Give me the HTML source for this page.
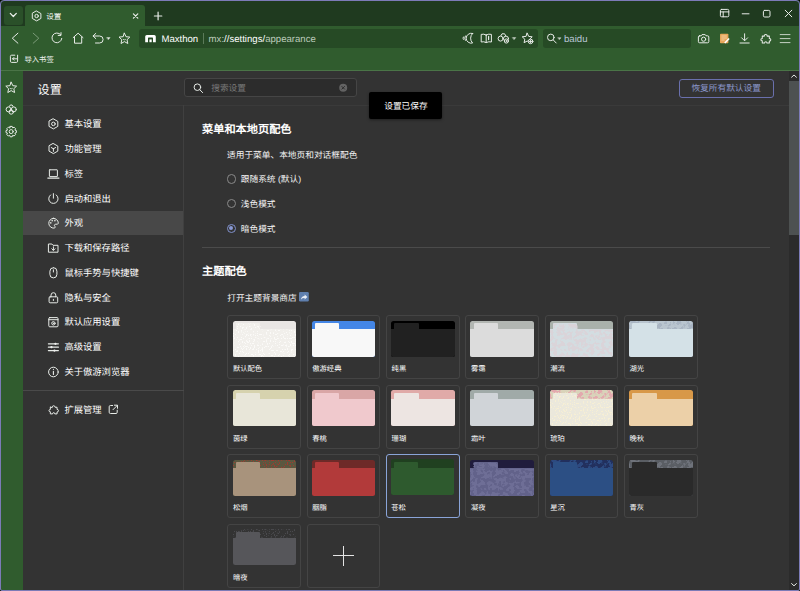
<!DOCTYPE html>
<html lang="zh-CN">
<head>
<meta charset="utf-8">
<title>设置</title>
<style>
html,body{margin:0;padding:0;background:#000;}
body{width:800px;height:591px;position:relative;overflow:hidden;font-family:"Liberation Sans",sans-serif;color:#fff;text-rendering:geometricPrecision;}
*{box-sizing:border-box;}
.abs,.win *{position:absolute;}
.win{position:absolute;left:0;top:0;width:800px;height:591px;background:#305c2e;border-radius:4px 4px 2px 2px;overflow:hidden;}
.frame{position:absolute;left:0;top:0;width:800px;height:591px;border:1px solid #7c7bb7;border-radius:4px 4px 2px 2px;z-index:50;}
.t{white-space:nowrap;line-height:12px;height:12px;}
svg{overflow:visible;}
.ic{fill:none;stroke:#e8ece8;stroke-width:1;stroke-linecap:round;stroke-linejoin:round;}
/* chrome */
.tabbar{left:0;top:0;width:800px;height:26px;background:#1f3a1f;}
.ddbtn{left:4px;top:6px;width:19px;height:18.5px;background:#2a5029;border-radius:3px;}
.tab{left:24.5px;top:5px;width:120.5px;height:22px;background:#305c2e;border-radius:3px 3px 0 0;}
.abar{left:139px;top:29px;width:399px;height:18.5px;background:#264a25;border-radius:3px;}
.sbar{left:542.5px;top:29px;width:148.5px;height:18.5px;background:#264a25;border-radius:3px;}
.chromeline{left:0;top:70px;width:800px;height:1px;background:#4a7447;}
/* page */
.page{left:23px;top:71px;width:777px;height:520px;background:#333333;}
.menu{left:23px;top:71px;width:160.5px;height:520px;}
.sel{left:23px;top:211px;width:160.5px;height:24px;background:#484848;}
.mi{left:64.4px;font-size:9.3px;color:#ffffff;font-weight:500;}
.hline{left:23px;top:104.5px;width:766px;height:1px;background:#3a3a3a;}
.vline{left:183.2px;top:105px;width:1px;height:486px;background:#404040;}
.msep{left:23px;top:390px;width:160.5px;height:1px;background:#4a4a4a;}
.search{left:183.8px;top:78.3px;width:173.2px;height:18.7px;background:#2c2c2c;border:1px solid #454545;border-radius:3px;}
.restore{left:678.5px;top:78.5px;width:95.8px;height:19px;border:1px solid #6a70ad;border-radius:3px;}
.toast{left:369px;top:92.2px;width:73px;height:26.5px;background:#000;border-radius:2px;z-index:20;box-shadow:0 1px 3px rgba(0,0,0,.4);}
.h2{left:202px;font-size:11.2px;font-weight:bold;color:#fff;line-height:14px;height:14px;}
.b{font-size:8.7px;color:#f6f6f6;}
.radio{left:226.6px;width:9.2px;height:9.2px;border:1px solid #8a8a8a;border-radius:50%;}
.divider{left:202px;top:247.2px;width:568px;height:1px;background:#4b4b4b;}
/* scrollbar */
.strack{left:789px;top:71px;width:10px;height:519px;background:#2b2b2b;}
.sthumb{left:789px;top:81px;width:10px;height:154px;background:#4d5151;}
/* themes */
.card{width:73.7px;height:64.2px;border:1px solid #444444;border-radius:3px;}
.pv{left:4.2px;top:4.8px;width:63.6px;height:36px;border-radius:2.5px;overflow:hidden;}
.pv i{left:3.3px;top:2.6px;width:24.2px;height:7px;border-radius:1px 1px 0 0;}
.pv b{left:0;top:8.6px;width:64px;height:28px;}
.card.cur{border:1.4px solid #8aa4d8;}
.card.cur .pv{left:3.8px;top:4.4px;}
.card.cur .lb{left:4.2px;top:46.6px;}
.lb{left:4.6px;top:47px;font-size:7.3px;color:#ffffff;font-weight:500;line-height:12px;height:12px;white-space:nowrap;}
</style>
</head>
<body>
<div class="win">
  <!-- ===== tab bar ===== -->
  <div class="tabbar"></div>
  <div class="ddbtn"></div>
  <div class="tab"></div>
  <div class="abar"></div>
  <div class="sbar"></div>
  <div class="chromeline"></div>

  <!-- ===== page ===== -->
  <div class="page"></div>
  <div class="sel"></div>
  <div class="hline"></div>
  <div class="vline"></div>
  <div class="msep"></div>
  <div class="search"></div>
  <div class="restore"></div>
  <div class="divider"></div>
  <div class="strack"></div>
  <div class="sthumb"></div>
  <div class="toast"></div>


  <!-- ===== icons: browser chrome ===== -->
  <svg class="abs" style="left:0;top:0;z-index:5;" width="800" height="591" viewBox="0 0 800 591">
    <g class="ic" stroke="#f2f5f2">
      <!-- tab dropdown chevron -->
      <path d="M10.3,13.4 L13.3,16.5 L16.3,13.4" stroke-width="1.3"/>
      <!-- tab favicon: hex gear -->
      <g transform="translate(36.6 16)"><path d="M0,-4.9 L4.3,-2.45 V2.45 L0,4.9 L-4.3,2.45 V-2.45 Z"/><circle r="1.7"/></g>
      <!-- tab close -->
      <path d="M133.4,13.8 L137.8,18.2 M137.8,13.8 L133.4,18.2" stroke-width="1.2"/>
      <!-- new tab + -->
      <path d="M154.4,16 H161.8 M158.1,12.2 V19.8" stroke-width="1.2"/>
    </g>
    <g class="ic" stroke="#97a995" stroke-width="0.9">
      <!-- window controls -->
      <rect x="720.4" y="9.4" width="8.4" height="7.4" rx="1.2"/><path d="M720.4,11.9 H728.8 M723.2,11.9 V16.8"/>
      <path d="M742.2,13.8 H749"/>
      <rect x="763.4" y="10.4" width="6.6" height="6.6" rx="1.3"/>
      <path d="M785.2,10.2 L791.8,16.8 M791.8,10.2 L785.2,16.8"/>
    </g>
    <g class="ic" stroke="#e6ece5">
      <!-- back / forward -->
      <path d="M17.9,33.2 L12.3,38.2 L17.9,43.2"/>
      <path d="M33.2,33.2 L38.8,38.2 L33.2,43.2" stroke="#7b9b78"/>
      <!-- reload -->
      <path d="M60.6,34.6 A4.9,4.9 0 1 0 61.8,38.4"/><path d="M61,32.6 V35.4 H58.2"/>
      <!-- home -->
      <path d="M73.2,37.6 L78.1,33.2 L83,37.6 M74.5,37 V43.2 H81.7 V37"/>
      <!-- undo close tab -->
      <path d="M95.8,33.4 L93,36 L95.8,38.6 M93.2,36 H99.6 A3.5,3.5 0 0 1 99.6,43 H95.5"/>
      <path d="M106.8,37.6 H110.2 L108.5,39.6 Z" fill="#e6ece5" stroke-width="0.4"/>
      <!-- favourite star -->
      <g transform="translate(124.4 38.6)"><path d="M0,-5.4 L1.6,-1.9 L5.4,-1.5 L2.6,1.1 L3.4,4.9 L0,3 L-3.4,4.9 L-2.6,1.1 L-5.4,-1.5 L-1.6,-1.9 Z"/><path d="M-1.2,0.9 Q0,1.9 1.2,0.9" stroke-width="0.8"/></g>
    </g>
    <!-- Maxthon logo -->
    <path d="M145.2,36.6 Q145.2,35 146.8,35 H154.2 Q155.8,35 155.8,36.6 V42.2 H153 V38.2 Q153,37.6 152.4,37.6 H148.6 Q148,37.6 148,38.2 V42.2 H145.2 Z" fill="#ffffff"/>
    <rect x="149.4" y="39.4" width="2.3" height="2.8" fill="#ffffff"/>
    <g class="ic" stroke="#c3d0c2" stroke-width="0.9">
      <!-- night mode -->
      <path d="M472.6,33.4 A5,5 0 1 0 472.6,43 A6.6,6.6 0 0 1 472.6,33.4 Z"/><path d="M465.3,36 Q464,38.2 465.3,40.4 M463.3,37 Q462.6,38.2 463.3,39.4"/>
      <!-- reader -->
      <path d="M486.2,35 Q483.6,33.6 481.2,34.4 V42 Q483.6,41.2 486.2,42.6 Q488.8,41.2 491.4,42 V34.4 Q488.8,33.6 486.2,35 Z M486.2,35 V42.6"/><path d="M488.6,36.4 V39.6" stroke-width="1.2"/>
      <!-- resource sniffer -->
      <circle cx="500.6" cy="38.6" r="2.5"/><circle cx="506" cy="38.6" r="2.5"/><path d="M501,35.6 L502,33.8 H504.6 L505.6,35.6"/><circle cx="506.4" cy="41" r="2.1" fill="#264a25"/><circle cx="506.4" cy="41" r="0.6"/>
      <path d="M512.6,37.6 H515.8 L514.2,39.5 Z" fill="#c3d0c2" stroke-width="0.4"/>
      <!-- add favourite -->
      <g transform="translate(527.2 38.2)"><path d="M0,-5 L1.5,-1.8 L5,-1.4 L2.4,1 L3.1,4.5 L0,2.8 L-3.1,4.5 L-2.4,1 L-5,-1.4 L-1.5,-1.8 Z"/></g>
      <circle cx="530.6" cy="41.4" r="2.3" fill="#264a25"/><path d="M529.4,41.4 H531.8 M530.6,40.2 V42.6"/>
      <!-- search engine -->
      <circle cx="550.8" cy="37.4" r="3.3"/><path d="M553.2,39.9 L556.2,43"/>
      <path d="M558,37.7 H561 L559.5,39.5 Z" fill="#c3d0c2" stroke-width="0.4"/>
    </g>
    <g class="ic" stroke="#dfe7de">
      <!-- screenshot camera -->
      <path d="M699.6,35.8 H701.2 L702,34.6 H705.2 L706,35.8 H707.6 Q708.8,35.8 708.8,37 V41.6 Q708.8,42.8 707.6,42.8 H699.6 Q698.4,42.8 698.4,41.6 V37 Q698.4,35.8 699.6,35.8 Z"/><circle cx="703.6" cy="39.2" r="2.1"/>
      <!-- download -->
      <path d="M744.6,33.8 V40.4 M741.6,37.8 L744.6,40.8 L747.6,37.8 M740,43 H749.2"/>
      <!-- extensions puzzle -->
      <g transform="translate(765.8 38.9) scale(0.84)" stroke-width="1.2"><path d="M-1.9,-3.3 Q-1.9,-5.2 -0.1,-5.2 Q1.7,-5.2 1.7,-3.3 H4.2 V-0.6 Q6,-0.6 6,1 Q6,2.6 4.2,2.6 V5 H1.4 Q1.4,3.4 0,3.4 Q-1.4,3.4 -1.4,5 H-4.2 V2.3 Q-5.9,2.3 -5.9,0.9 Q-5.9,-0.5 -4.2,-0.5 V-3.3 Z"/></g>
      <!-- main menu -->
      <path d="M780.2,34.6 H790 M780.2,38.6 H790 M780.2,42.6 H790" stroke="#c6d2c5" stroke-width="1"/>
    </g>
    <!-- note icon -->
    <rect x="720" y="33.8" width="8.4" height="9.4" rx="0.8" fill="#e7a65a"/>
    <path d="M721.4,36 H726.8 M721.4,38 H726.8 M721.4,40 H724.6" stroke="#f7d9b0" stroke-width="0.8" fill="none"/>
    <path d="M724.2,42.6 L728.6,38 L729.6,39 L725.4,43.4 Z" fill="#ffffff"/>
    <!-- bookmarks bar import icon -->
    <g class="ic" stroke="#e6ece5"><path d="M14.8,55.2 H11.6 Q10.4,55.2 10.4,56.4 V61.2 Q10.4,62.4 11.6,62.4 H16.4 Q17.6,62.4 17.6,61.2 V55.2 M12.6,58.8 H16.6 M14,57.4 L12.6,58.8 L14,60.2"/></g>
    <!-- left sidebar icons -->
    <g class="ic" stroke="#dfe7de">
      <g transform="translate(11.2 87.6)"><path d="M0,-5.4 L1.6,-1.9 L5.4,-1.5 L2.6,1.1 L3.4,4.9 L0,3 L-3.4,4.9 L-2.6,1.1 L-5.4,-1.5 L-1.6,-1.9 Z"/><path d="M-1.2,0.9 Q0,1.9 1.2,0.9" stroke-width="0.8"/></g>
      <g transform="translate(11.2 109.6)"><circle cx="-2.6" cy="-0.2" r="2.5"/><circle cx="2.6" cy="-0.2" r="2.5"/><circle cx="0" cy="2.4" r="2.2"/><path d="M-1.8,-3.2 L-0.9,-4.6 H0.9 L1.8,-3.2"/></g>
      <g transform="translate(11.2 131.6)"><path d="M-1,-5.2 H1 L1.5,-3.7 L2.9,-4.4 L4.4,-2.9 L3.7,-1.5 L5.2,-1 V1 L3.7,1.5 L4.4,2.9 L2.9,4.4 L1.5,3.7 L1,5.2 H-1 L-1.5,3.7 L-2.9,4.4 L-4.4,2.9 L-3.7,1.5 L-5.2,1 V-1 L-3.7,-1.5 L-4.4,-2.9 L-2.9,-4.4 L-1.5,-3.7 Z"/><circle r="2"/></g>
    </g>
  </svg>


  <!-- ===== icons: settings page ===== -->
  <svg class="abs" style="left:0;top:0;z-index:6;" width="800" height="591" viewBox="0 0 800 591">
    <g class="ic" stroke="#efefef">
      <g transform="translate(53.4 123.9)"><path d="M0,-5 L4.4,-2.5 V2.5 L0,5 L-4.4,2.5 V-2.5 Z"/><circle r="1.8"/></g>
      <g transform="translate(53.4 148.6)"><path d="M0,-5 L4.4,-2.5 V2.5 L0,5 L-4.4,2.5 V-2.5 Z M0,0.2 V2.8 M0,0.2 L-2.2,-1.1 M0,0.2 L2.2,-1.1"/></g>
      <g transform="translate(53.4 174)"><rect x="-4" y="-4.2" width="8" height="6.8" rx="0.4"/><path d="M-5.6,4.1 H5.6" stroke-width="1.1"/></g>
      <g transform="translate(53.4 198.6)"><path d="M0,-5 V-0.4 M-2.8,-3.7 A4.7,4.7 0 1 0 2.8,-3.7"/></g>
      <g transform="translate(53.4 223.2)"><path d="M0,-4.9 A4.9,4.9 0 1 0 0.6,4.9 C2,4.9 2,3.6 1.3,2.9 C0.5,2 1.2,1 2.4,1 H3.6 C4.9,1 4.9,0 4.9,-0.3 A4.9,4.9 0 0 0 0,-4.9 Z"/><path d="M-2.6,-0.4 V-0.3 M-1.2,-2.6 V-2.5 M1.5,-2.6 V-2.5" stroke-width="1.5"/></g>
      <g transform="translate(53.4 248)"><path d="M-4.6,-4 H-1.5 L-0.4,-2.7 H4.6 V4.2 H-4.6 Z M0,-1.2 V2.2 M-1.6,0.8 L0,2.4 L1.6,0.8"/></g>
      <g transform="translate(53.4 272.8)"><rect x="-3.5" y="-5.1" width="7" height="10.2" rx="3.5"/><path d="M0,-3 V-0.8"/></g>
      <g transform="translate(53.4 297.8)"><rect x="-4.3" y="-1" width="8.6" height="6" rx="1"/><path d="M-2.4,-1 V-2.7 A2.4,2.4 0 0 1 2.4,-2.7 V-1 M0,1.5 V2.7"/></g>
      <g transform="translate(53.4 322.2)"><rect x="-4.6" y="-4.6" width="9.2" height="9.2" rx="1"/><path d="M-4.6,-2.5 H4.6"/><circle cy="1.1" r="1.7"/><circle cy="1.1" r="0.3"/></g>
      <g transform="translate(53.4 347.1)"><path d="M-5,-3.3 H5 M-5,0.1 H5 M-5,3.5 H5" stroke-width="1.2"/><path d="M2,-3.3 H2.1 M-2,0.1 H-1.9 M1,3.5 H1.1" stroke-width="2.2" stroke="#efefef"/></g>
      <g transform="translate(53.4 372)"><circle r="4.8"/><path d="M0,-0.8 V2.4 M0,-2.6 V-2.5" stroke-width="1.1"/></g>
      <g transform="translate(53.7 409.9) scale(0.8)" stroke-width="1.25"><path d="M-1.9,-3.3 Q-1.9,-5.2 -0.1,-5.2 Q1.7,-5.2 1.7,-3.3 H4.2 V-0.6 Q6,-0.6 6,1 Q6,2.6 4.2,2.6 V5 H1.4 Q1.4,3.4 0,3.4 Q-1.4,3.4 -1.4,5 H-4.2 V2.3 Q-5.9,2.3 -5.9,0.9 Q-5.9,-0.5 -4.2,-0.5 V-3.3 Z"/></g>
      <!-- external link -->
      <g transform="translate(113.2 409.4)"><path d="M-0.6,-3.9 H-2.8 Q-4,-3.9 -4,-2.7 V2.9 Q-4,4.1 -2.8,4.1 H2.8 Q4,4.1 4,2.9 V0.8 M1.2,-4.2 H4.3 V-1.1 M4.2,-4.1 L-0.2,0.3"/></g>
    </g>
    <!-- search box magnifier -->
    <g class="ic" stroke="#8e8e8e"><circle cx="197.4" cy="87.2" r="3.3"/><path d="M199.8,89.7 L202.6,92.6"/></g>
    <!-- search clear -->
    <circle cx="343.2" cy="87.8" r="4" fill="#636363"/><path d="M341.6,86.2 L344.8,89.4 M344.8,86.2 L341.6,89.4" stroke="#2c2c2c" stroke-width="1" fill="none"/>
    <!-- open store share icon -->
    <rect x="299" y="292" width="9.8" height="9.4" rx="1.2" fill="#5f7fae"/>
    <path d="M301,299.4 Q301.4,296.2 304.6,296 V294.4 L307.4,297 L304.6,299.6 V298 Q302.4,297.9 301,299.4 Z" fill="#e9eef6"/>
    <!-- scrollbar arrows -->
    <g class="ic" stroke="#6a6a6a" stroke-width="0.9"><path d="M791.6,77.2 L794,75 L796.4,77.2"/><path d="M791.6,583.6 L794,585.8 L796.4,583.6"/></g>
  </svg>

  <!-- ===== chrome text ===== -->
  <div class="t" style="left:46.2px;top:11.3px;font-size:7.6px;color:#f4f6f4;">设置</div>
  <div class="t" style="left:161.4px;top:33.9px;font-size:9.6px;color:#ffffff;">Maxthon</div>
  <div class="abs" style="left:202.5px;top:33px;width:1px;height:10.5px;background:#5b7a59;"></div>
  <div class="t" style="left:208.6px;top:33.9px;font-size:9.6px;color:#bccabb;">mx:<span style="position:static;color:#ffffff;">//settings/</span>appearance</div>
  <div class="t" style="left:564px;top:33.9px;font-size:9.6px;color:#b9c6d6;">baidu</div>
  <div class="t" style="left:24.4px;top:54.1px;font-size:7.35px;color:#eef2ee;">导入书签</div>

  <!-- ===== settings header ===== -->
  <div class="t" style="left:37.6px;top:81.6px;font-size:12.1px;line-height:16px;height:16px;color:#ffffff;">设置</div>
  <div class="t b" style="left:211.2px;top:82px;color:#787878;">搜索设置</div>
  <div class="t b" style="left:691.4px;top:82px;color:#8c98cc;">恢复所有默认设置</div>
  <div class="t b" style="left:384.2px;top:100.4px;color:#ffffff;z-index:21;">设置已保存</div>

  <!-- ===== settings menu ===== -->
  <div class="t mi" style="top:117.9px;">基本设置</div>
  <div class="t mi" style="top:142.6px;">功能管理</div>
  <div class="t mi" style="top:168px;">标签</div>
  <div class="t mi" style="top:192.5px;">启动和退出</div>
  <div class="t mi" style="top:217.2px;">外观</div>
  <div class="t mi" style="top:242px;">下载和保存路径</div>
  <div class="t mi" style="top:266.7px;">鼠标手势与快捷键</div>
  <div class="t mi" style="top:291.6px;">隐私与安全</div>
  <div class="t mi" style="top:316.2px;">默认应用设置</div>
  <div class="t mi" style="top:341px;">高级设置</div>
  <div class="t mi" style="top:365.8px;">关于傲游浏览器</div>
  <div class="t mi" style="top:403.6px;">扩展管理</div>

  <!-- ===== main content ===== -->
  <div class="t h2" style="top:122.9px;">菜单和本地页配色</div>
  <div class="t b" style="left:227px;top:148.5px;">适用于菜单、本地页和对话框配色</div>
  <div class="radio" style="top:174.4px;"></div>
  <div class="t b" style="left:240.8px;top:173px;">跟随系统 (默认)</div>
  <div class="radio" style="top:199.3px;"></div>
  <div class="t b" style="left:240.8px;top:197.9px;">浅色模式</div>
  <div class="radio" style="top:223.9px;border-color:#8090cc;"><div style="left:1.6px;top:1.6px;width:4px;height:4px;border-radius:50%;background:#8a9ad6;"></div></div>
  <div class="t b" style="left:240.8px;top:222.5px;">暗色模式</div>
  <div class="t h2" style="top:264.7px;">主题配色</div>
  <div class="t b" style="left:227.2px;top:292px;">打开主题背景商店</div>

  <!-- ===== texture filters for theme previews ===== -->
  <svg class="abs" style="left:0;top:0;" width="0" height="0">
    <defs>
      <filter id="mot" x="0" y="0" width="100%" height="100%" color-interpolation-filters="sRGB">
        <feTurbulence type="fractalNoise" baseFrequency="0.27" numOctaves="2" seed="7" result="n"/>
        <feColorMatrix in="n" type="matrix" values="0 0 0 0 0  0 0 0 0 0  0 0 0 0 0  0 0 0 14 -6.6" result="m"/>
        <feComposite in="SourceGraphic" in2="m" operator="in"/>
      </filter>
      <filter id="spk" x="0" y="0" width="100%" height="100%" color-interpolation-filters="sRGB">
        <feTurbulence type="fractalNoise" baseFrequency="0.75" numOctaves="1" seed="11" result="n"/>
        <feColorMatrix in="n" type="matrix" values="0 0 0 0 0  0 0 0 0 0  0 0 0 0 0  0 0 0 16 -9.2" result="m"/>
        <feComposite in="SourceGraphic" in2="m" operator="in"/>
      </filter>
    </defs>
  </svg>
  <!-- ===== theme cards ===== -->
  <div class="card" style="left:227.4px;top:315.0px;"><div class="pv" style="background:#e9e6e4;"><b style="background:#f1efeb;"></b><i style="background:#f1efeb;"></i><svg style="left:0;top:0;" width="64" height="36"><g filter="url(#spk)"><rect x="0" y="8.6" width="64" height="28" fill="#fbfaf8"/><rect x="3.3" y="2.6" width="24.2" height="6" fill="#fbfaf8"/></g></svg></div><div class="lb">默认配色</div></div>
  <div class="card" style="left:306.7px;top:315.0px;"><div class="pv" style="background:#4486e6;"><b style="background:#f8f8f8;"></b><i style="background:#f8f8f8;"></i></div><div class="lb">傲游经典</div></div>
  <div class="card" style="left:386.0px;top:315.0px;"><div class="pv" style="background:#000000;"><b style="background:#212121;"></b><i style="background:#212121;"></i></div><div class="lb">纯黑</div></div>
  <div class="card" style="left:465.3px;top:315.0px;"><div class="pv" style="background:#b2b6b2;"><b style="background:#dcdcdc;"></b><i style="background:#dcdcdc;"></i></div><div class="lb">雾霭</div></div>
  <div class="card" style="left:544.6px;top:315.0px;"><div class="pv" style="background:#a9b1ab;"><b style="background:#d3dde1;"></b><i style="background:#d3dde1;"></i><svg style="left:0;top:0;" width="64" height="36"><g filter="url(#mot)"><rect x="0" y="8.6" width="64" height="28" fill="#dad4d9"/><rect x="3.3" y="2.6" width="24.2" height="6" fill="#dad4d9"/></g></svg></div><div class="lb">潮流</div></div>
  <div class="card" style="left:623.9px;top:315.0px;"><div class="pv" style="background:#b9c5cf;"><svg style="left:0;top:0;" width="64" height="9"><g filter="url(#mot)"><rect x="0" y="0" width="64" height="8.6" fill="#a9b5c3"/></g></svg><b style="background:#d4e1e7;"></b><i style="background:#d4e1e7;"></i></div><div class="lb">湖光</div></div>
  <div class="card" style="left:227.4px;top:384.5px;"><div class="pv" style="background:#d6d2ae;"><b style="background:#e8e6d9;"></b><i style="background:#e8e6d9;"></i></div><div class="lb">茵绿</div></div>
  <div class="card" style="left:306.7px;top:384.5px;"><div class="pv" style="background:#d9a6a6;"><b style="background:#f0c9cd;"></b><i style="background:#f0c9cd;"></i></div><div class="lb">春桃</div></div>
  <div class="card" style="left:386.0px;top:384.5px;"><div class="pv" style="background:#e0aaa8;"><b style="background:#ede5e2;"></b><i style="background:#ede5e2;"></i></div><div class="lb">珊瑚</div></div>
  <div class="card" style="left:465.3px;top:384.5px;"><div class="pv" style="background:#a0aaa8;"><b style="background:#d0d4d8;"></b><i style="background:#d0d4d8;"></i></div><div class="lb">霜叶</div></div>
  <div class="card" style="left:544.6px;top:384.5px;"><div class="pv" style="background:#d9d3ba;"><svg style="left:0;top:0;" width="64" height="9"><g filter="url(#mot)"><rect x="0" y="0" width="64" height="8.6" fill="#e3a9ae"/></g></svg><b style="background:#ebe8dc;"></b><i style="background:#ebe8dc;"></i><svg style="left:0;top:0;" width="64" height="36"><g filter="url(#spk)"><rect x="0" y="8.6" width="64" height="28" fill="#f7efd4"/><rect x="3.3" y="2.6" width="24.2" height="6" fill="#f7efd4"/></g></svg></div><div class="lb">琥珀</div></div>
  <div class="card" style="left:623.9px;top:384.5px;"><div class="pv" style="background:#d89848;"><b style="background:#ecd0a8;"></b><i style="background:#ecd0a8;"></i></div><div class="lb">晚秋</div></div>
  <div class="card" style="left:227.4px;top:454.0px;"><div class="pv" style="background:#5a5840;"><svg style="left:0;top:0;" width="64" height="9"><g filter="url(#spk)"><rect x="0" y="0" width="64" height="8.6" fill="#a03a30"/></g></svg><b style="background:#a8937c;"></b><i style="background:#a8937c;"></i></div><div class="lb">松烟</div></div>
  <div class="card" style="left:306.7px;top:454.0px;"><div class="pv" style="background:#6e2a28;"><b style="background:#b23a3a;"></b><i style="background:#b23a3a;"></i></div><div class="lb">胭脂</div></div>
  <div class="card cur" style="left:386.0px;top:454.0px;"><div class="pv" style="background:#204020;"><b style="background:#2e5a2e;"></b><i style="background:#2e5a2e;"></i></div><div class="lb">苍松</div></div>
  <div class="card" style="left:465.3px;top:454.0px;"><div class="pv" style="background:#201c3c;"><b style="background:#62628a;"></b><i style="background:#62628a;"></i><svg style="left:0;top:0;" width="64" height="36"><g filter="url(#mot)"><rect x="0" y="8.6" width="64" height="28" fill="#6e6e96"/><rect x="3.3" y="2.6" width="24.2" height="6" fill="#6e6e96"/></g></svg></div><div class="lb">凝夜</div></div>
  <div class="card" style="left:544.6px;top:454.0px;"><div class="pv" style="background:#22305e;"><svg style="left:0;top:0;" width="64" height="9"><g filter="url(#mot)"><rect x="0" y="0" width="64" height="8.6" fill="#2d4a80"/></g></svg><b style="background:#2c4f84;"></b><i style="background:#2c4f84;"></i></div><div class="lb">星沉</div></div>
  <div class="card" style="left:623.9px;top:454.0px;"><div class="pv" style="background:#5a5e64;"><svg style="left:0;top:0;" width="64" height="9"><g filter="url(#mot)"><rect x="0" y="0" width="64" height="8.6" fill="#6e727a"/></g></svg><b style="background:#2a2a2a;"></b><i style="background:#2a2a2a;"></i></div><div class="lb">青灰</div></div>
  <div class="card" style="left:227.4px;top:523.5px;"><div class="pv" style="background:#343434;"><svg style="left:0;top:0;" width="64" height="9"><g filter="url(#spk)"><rect x="0" y="0" width="64" height="8.6" fill="#4a4a4e"/></g></svg><b style="background:#56565a;"></b><i style="background:#56565a;"></i></div><div class="lb">暗夜</div></div>
  <div class="card" style="left:306.7px;top:523.5px;"><div style="left:25.6px;top:30.7px;width:20.6px;height:1px;background:#e4e4e4;"></div><div style="left:35.4px;top:21px;width:1px;height:20.4px;background:#e4e4e4;"></div></div>
</div>
<div class="frame"></div>
</body>
</html>
